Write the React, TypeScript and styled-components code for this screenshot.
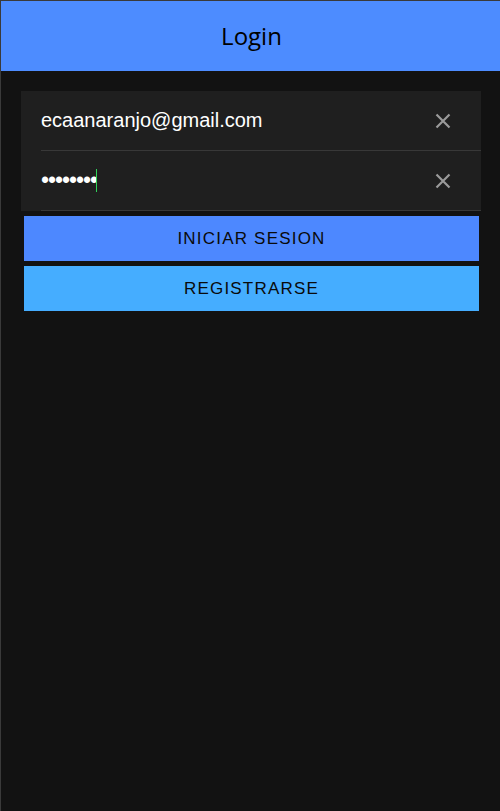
import React from "react";
import styled, { createGlobalStyle } from "styled-components";

const GlobalStyle = createGlobalStyle`
  html, body { margin: 0; padding: 0; background: #121212; }
  * { box-sizing: border-box; }
  body { font-family: "Liberation Sans", Arial, sans-serif; }
`;

const Page = styled.div`
  min-height: 100vh;
  background: #121212;
  border-top: 1px solid #3a3a3a;
  border-left: 1px solid #3a3a3a;
  display: flex;
  flex-direction: column;
`;

const Header = styled.header`
  height: 70px;
  background: #4d8cff;
  display: flex;
  align-items: center;
  justify-content: center;
`;

const Title = styled.h1`
  margin: 0;
  font-family: "Open Sans", "Liberation Sans", sans-serif;
  font-weight: 400;
  font-size: 24px;
  color: #000;
  padding-left: 2px;
  padding-bottom: 1px;
`;

const Content = styled.main`
  padding: 20px 19px 0 20px;
  display: flex;
  flex-direction: column;
`;

const Card = styled.div`
  background: #1f1f1f;
  display: flex;
  flex-direction: column;
`;

const Row = styled.div`
  height: 60px;
  margin-left: 20px;
  border-bottom: 1px solid #383838;
  display: flex;
  align-items: center;
  padding-right: 30px;
`;

const Value = styled.div`
  flex: 1;
  display: flex;
  align-items: center;
  font-size: 20px;
  color: #ffffff;
  font-family: "Liberation Sans", Arial, sans-serif;
`;

const Dots = styled.span`
  font-size: 23px;
  letter-spacing: -1.05px;
  width: 55px;
  overflow: hidden;
  white-space: nowrap;
`;

const Caret = styled.span`
  display: block;
  width: 1px;
  height: 23px;
  background: #2fd35a;
`;

const ClearButton = styled.button`
  width: 16px;
  height: 16px;
  padding: 0;
  border: 0;
  background: transparent;
  display: flex;
  align-items: center;
  justify-content: center;
  color: #9a9a9a;
  cursor: pointer;
`;

const Actions = styled.div`
  display: flex;
  flex-direction: column;
  gap: 5px;
  margin: 5px 2px 0 3px;
`;

const Button = styled.button<{ $tone: string }>`
  height: 45px;
  border: 0;
  background: ${(p) => p.$tone};
  color: #0a0a0a;
  font-family: "Liberation Sans", Arial, sans-serif;
  font-size: 17px;
  letter-spacing: 1.2px;
  text-transform: uppercase;
  cursor: pointer;
`;

const XIcon = () => (
  <svg width="16" height="16" viewBox="0 0 16 16" fill="none">
    <path d="M1.5 1.5 L14.5 14.5 M14.5 1.5 L1.5 14.5" stroke="currentColor" strokeWidth="2.2" strokeLinecap="butt" />
  </svg>
);

export default function App() {
  return (
    <>
      <GlobalStyle />
      <Page>
        <Header>
          <Title>Login</Title>
        </Header>
        <Content>
          <Card>
            <Row>
              <Value>ecaanaranjo@gmail.com</Value>
              <ClearButton aria-label="Borrar">
                <XIcon />
              </ClearButton>
            </Row>
            <Row>
              <Value>
                <Dots>{"\u2022\u2022\u2022\u2022\u2022\u2022\u2022\u2022"}</Dots>
                <Caret />
              </Value>
              <ClearButton aria-label="Borrar">
                <XIcon />
              </ClearButton>
            </Row>
          </Card>
          <Actions>
            <Button $tone="#4d88ff">Iniciar Sesion</Button>
            <Button $tone="#45adff">Registrarse</Button>
          </Actions>
        </Content>
      </Page>
    </>
  );
}
